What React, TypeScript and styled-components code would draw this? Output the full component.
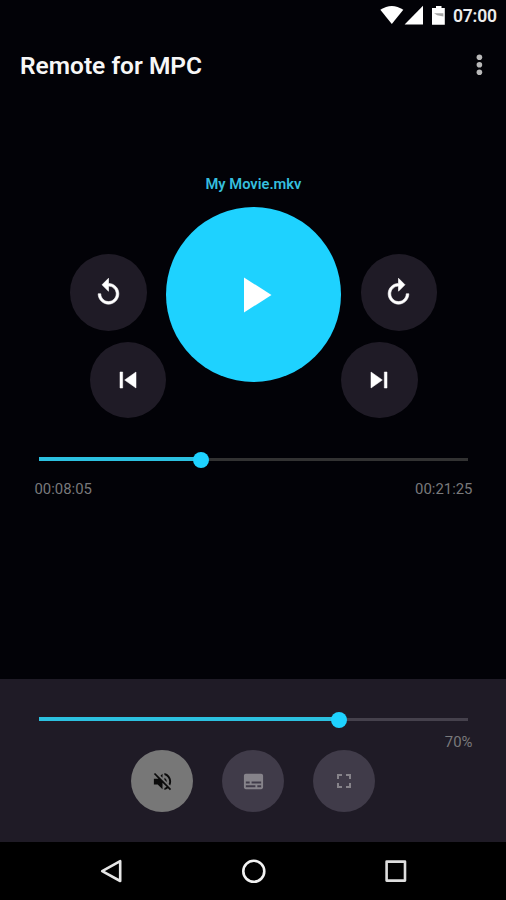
import React from 'react';
import styled, { createGlobalStyle } from 'styled-components';

const CYAN = '#1ed2ff';
const PANEL = '#1f1b26';

const GlobalStyle = createGlobalStyle`
  * { box-sizing: border-box; }
  body { margin: 0; background: #020207; font-family: Roboto, sans-serif; }
  button { font: inherit; border: 0; padding: 0; background: none; cursor: pointer; }
  svg { display: block; flex: none; }
`;

const Screen = styled.div`
  width: 506px;
  height: 900px;
  display: flex;
  flex-direction: column;
  background: #020207;
  overflow: hidden;
`;

const StatusBar = styled.header`
  height: 32px;
  display: flex;
  align-items: center;
  justify-content: flex-end;
  padding-right: 9px;
`;

const Clock = styled.span`
  width: 44px;
  margin-left: 7px;
  font-size: 17.5px;
  font-weight: 600;
  line-height: 32px;
  letter-spacing: -0.2px;
  color: #ececec;
  white-space: nowrap;
`;

const AppBar = styled.div`
  height: 66px;
  display: flex;
  align-items: center;
  justify-content: space-between;
  padding: 0 15px 0 20px;
`;

const Title = styled.h1`
  margin: 2px 0 0;
  font-size: 24.5px;
  font-weight: 600;
  line-height: 30px;
  color: #f7f7f7;
`;

const MenuButton = styled.button`
  width: 24px;
  height: 30px;
  color: #b9b9b9;
`;

const Player = styled.main`
  flex: 1;
  display: flex;
  flex-direction: column;
  align-items: center;
  padding-top: 76px;
`;

const TrackName = styled.div`
  margin-left: 1px;
  font-size: 14.7px;
  font-weight: 600;
  line-height: 20px;
  color: #35bedd;
`;

const Transport = styled.div`
  display: flex;
  align-items: flex-start;
  margin-top: 13px;
  padding-left: 1px;
`;

const Cluster = styled.div<{ $side: 'left' | 'right' }>`
  width: 96px;
  display: flex;
  flex-direction: column;
  gap: 11px;
  padding-top: 47px;
  align-items: ${(p) => (p.$side === 'left' ? 'flex-start' : 'flex-end')};
  & > :last-child {
    align-self: ${(p) => (p.$side === 'left' ? 'flex-end' : 'flex-start')};
  }
`;

const RoundButton = styled.button<{ $size: number; $bg: string; $fg: string }>`
  width: ${(p) => p.$size}px;
  height: ${(p) => p.$size}px;
  flex: none;
  display: flex;
  align-items: center;
  justify-content: center;
  border-radius: 50%;
  background: ${(p) => p.$bg};
  color: ${(p) => p.$fg};
`;

const SliderRow = styled.div<{ $top: number }>`
  width: 429px;
  height: 16px;
  margin: ${(p) => p.$top}px 0 0 1px;
  display: flex;
  align-items: center;
`;

const Filled = styled.div`
  height: 4px;
  background: #2cc1e0;
`;

const Thumb = styled.div`
  width: 16px;
  height: 16px;
  margin: 1px -8px 0;
  border-radius: 50%;
  background: ${CYAN};
  z-index: 1;
`;

const Remaining = styled.div<{ $color: string }>`
  flex: 1;
  height: 3px;
  background: ${(p) => p.$color};
`;

const Labels = styled.div<{ $top: number; $end?: boolean }>`
  width: 438px;
  margin: ${(p) => p.$top}px 0 0 1px;
  display: flex;
  justify-content: ${(p) => (p.$end ? 'flex-end' : 'space-between')};
  font-size: 14.9px;
  line-height: 20px;
  color: #79797b;
`;

const VolumePanel = styled.section`
  height: 163px;
  display: flex;
  flex-direction: column;
  align-items: center;
  background: ${PANEL};
`;

const Toggles = styled.div`
  display: flex;
  gap: 29px;
  margin-top: -2px;
`;

const NavBar = styled.nav`
  height: 58px;
  display: flex;
  justify-content: center;
  align-items: center;
  gap: 112px;
  background: #000;
`;

const NavButton = styled.button`
  width: 30px;
  height: 30px;
`;

const ICONS = {
  replay:
    'M12 5V1L7 6l5 5V7c3.31 0 6 2.69 6 6s-2.69 6-6 6-6-2.69-6-6H4c0 4.42 3.58 8 8 8s8-3.58 8-8-3.58-8-8-8z',
  forward:
    'M12 5V1l5 5-5 5V7c-3.31 0-6 2.69-6 6s2.69 6 6 6 6-2.69 6-6h2c0 4.42-3.58 8-8 8s-8-3.58-8-8 3.58-8 8-8z',
  previous: 'M6 6h2v12H6zm3.5 6l8.5 6V6z',
  next: 'M6 18l8.5-6L6 6v12zM16 6v12h2V6h-2z',
  play: 'M8 5v14l11-7z',
  mute:
    'M16.5 12c0-1.77-1.02-3.29-2.5-4.03v2.21l2.45 2.45c.03-.2.05-.41.05-.63zm2.5 0c0 .94-.2 1.82-.54 2.64l1.51 1.51C20.63 14.91 21 13.5 21 12c0-4.28-2.99-7.86-7-8.77v2.06c2.89.86 5 3.54 5 6.71zM4.27 3L3 4.27 7.73 9H3v6h4l5 5v-6.73l4.25 4.25c-.67.52-1.42.93-2.25 1.18v2.06c1.38-.31 2.63-.95 3.69-1.81L19.73 21 21 19.73l-9-9L4.27 3zM12 4L9.91 6.09 12 8.18V4z',
  subtitles:
    'M20 4H4c-1.1 0-2 .9-2 2v12c0 1.1.9 2 2 2h16c1.1 0 2-.9 2-2V6c0-1.1-.9-2-2-2zM4 12h4v2H4v-2zm10 6H4v-2h10v2zm6 0h-4v-2h4v2zm0-4H10v-2h10v2z',
  fullscreen:
    'M7 14H5v5h5v-2H7v-3zm-2-4h2V7h3V5H5v5zm12 7h-3v2h5v-5h-2v3zM14 5v2h3v3h2V5h-5z',
};

function Icon({ name, size, weight = 0 }: { name: keyof typeof ICONS; size: number; weight?: number }) {
  return (
    <svg width={size} height={size} viewBox="0 0 24 24" fill="currentColor" stroke="currentColor" strokeWidth={weight}>
      <path d={ICONS[name]} />
    </svg>
  );
}

function StatusIcons() {
  return (
    <svg width="66" height="32" viewBox="380 0 66 32" fill="#fff">
      <path d="M380.3 9.8Q391.8 2.2 403.3 9.8L391.8 24z" />
      <path d="M423 5.8V24.6H404.6z" />
      <path d="M436 6h5.5v2h3.3v16.8H432V8h4z" />
      <path d="M434 13.2h9.4v3.2l-6.2-1.2z" fill="#a5a5a5" />
    </svg>
  );
}

function Slider({ value, top, track }: { value: number; top: number; track: string }) {
  return (
    <SliderRow $top={top}>
      <Filled style={{ width: `${value}%` }} />
      <Thumb />
      <Remaining $color={track} />
    </SliderRow>
  );
}

export default function App() {
  return (
    <Screen>
      <GlobalStyle />
      <StatusBar>
        <StatusIcons />
        <Clock>07:00</Clock>
      </StatusBar>
      <AppBar>
        <Title>Remote for MPC</Title>
        <MenuButton aria-label="More options">
          <svg width="24" height="30" viewBox="0 0 24 30" fill="currentColor">
            <circle cx="12.4" cy="7.2" r="2.8" />
            <circle cx="12.4" cy="14.7" r="2.8" />
            <circle cx="12.4" cy="22.2" r="2.8" />
          </svg>
        </MenuButton>
      </AppBar>
      <Player>
        <TrackName>My Movie.mkv</TrackName>
        <Transport>
          <Cluster $side="left">
            <RoundButton $size={76.5} $bg={PANEL} $fg="#fff" aria-label="Rewind">
              <Icon name="replay" size={31} weight={0.5} />
            </RoundButton>
            <RoundButton $size={76.5} $bg={PANEL} $fg="#fff" aria-label="Previous">
              <Icon name="previous" size={32} weight={0.4} />
            </RoundButton>
          </Cluster>
          <RoundButton $size={175} $bg={CYAN} $fg="#fff" aria-label="Play">
            <Icon name="play" size={60} />
          </RoundButton>
          <Cluster $side="right">
            <RoundButton $size={76.5} $bg={PANEL} $fg="#fff" aria-label="Forward">
              <Icon name="forward" size={31} weight={0.5} />
            </RoundButton>
            <RoundButton $size={76.5} $bg={PANEL} $fg="#fff" aria-label="Next">
              <Icon name="next" size={32} weight={0.4} />
            </RoundButton>
          </Cluster>
        </Transport>
        <Slider value={37.8} top={33} track="#323232" />
        <Labels $top={12}>
          <span>00:08:05</span>
          <span>00:21:25</span>
        </Labels>
      </Player>
      <VolumePanel>
        <Slider value={70} top={32} track="#45414c" />
        <Labels $top={5} $end>
          <span>70%</span>
        </Labels>
        <Toggles>
          <RoundButton $size={62} $bg="#777777" $fg="#0b0b0b" aria-label="Mute">
            <Icon name="mute" size={23} />
          </RoundButton>
          <RoundButton $size={62} $bg="#403b49" $fg="#86838a" aria-label="Subtitles">
            <Icon name="subtitles" size={23} />
          </RoundButton>
          <RoundButton $size={62} $bg="#403b49" $fg="#86838a" aria-label="Fullscreen">
            <Icon name="fullscreen" size={24} />
          </RoundButton>
        </Toggles>
      </VolumePanel>
      <NavBar>
        <NavButton aria-label="Back">
          <svg width="30" height="30" viewBox="0 0 30 30" fill="none" stroke="#e6e6e6" strokeWidth="2.6" strokeLinejoin="round">
            <path d="M24.2 5.2V25L6.2 15.2z" />
          </svg>
        </NavButton>
        <NavButton aria-label="Home">
          <svg width="30" height="30" viewBox="0 0 30 30" fill="none" stroke="#f2f2f2" strokeWidth="2.6">
            <circle cx="15.8" cy="15.3" r="10.5" />
          </svg>
        </NavButton>
        <NavButton aria-label="Recent apps">
          <svg width="30" height="30" viewBox="0 0 30 30" fill="none" stroke="#dedede" strokeWidth="2.6" strokeLinejoin="round">
            <rect x="6.6" y="5.6" width="18.4" height="19" />
          </svg>
        </NavButton>
      </NavBar>
    </Screen>
  );
}
